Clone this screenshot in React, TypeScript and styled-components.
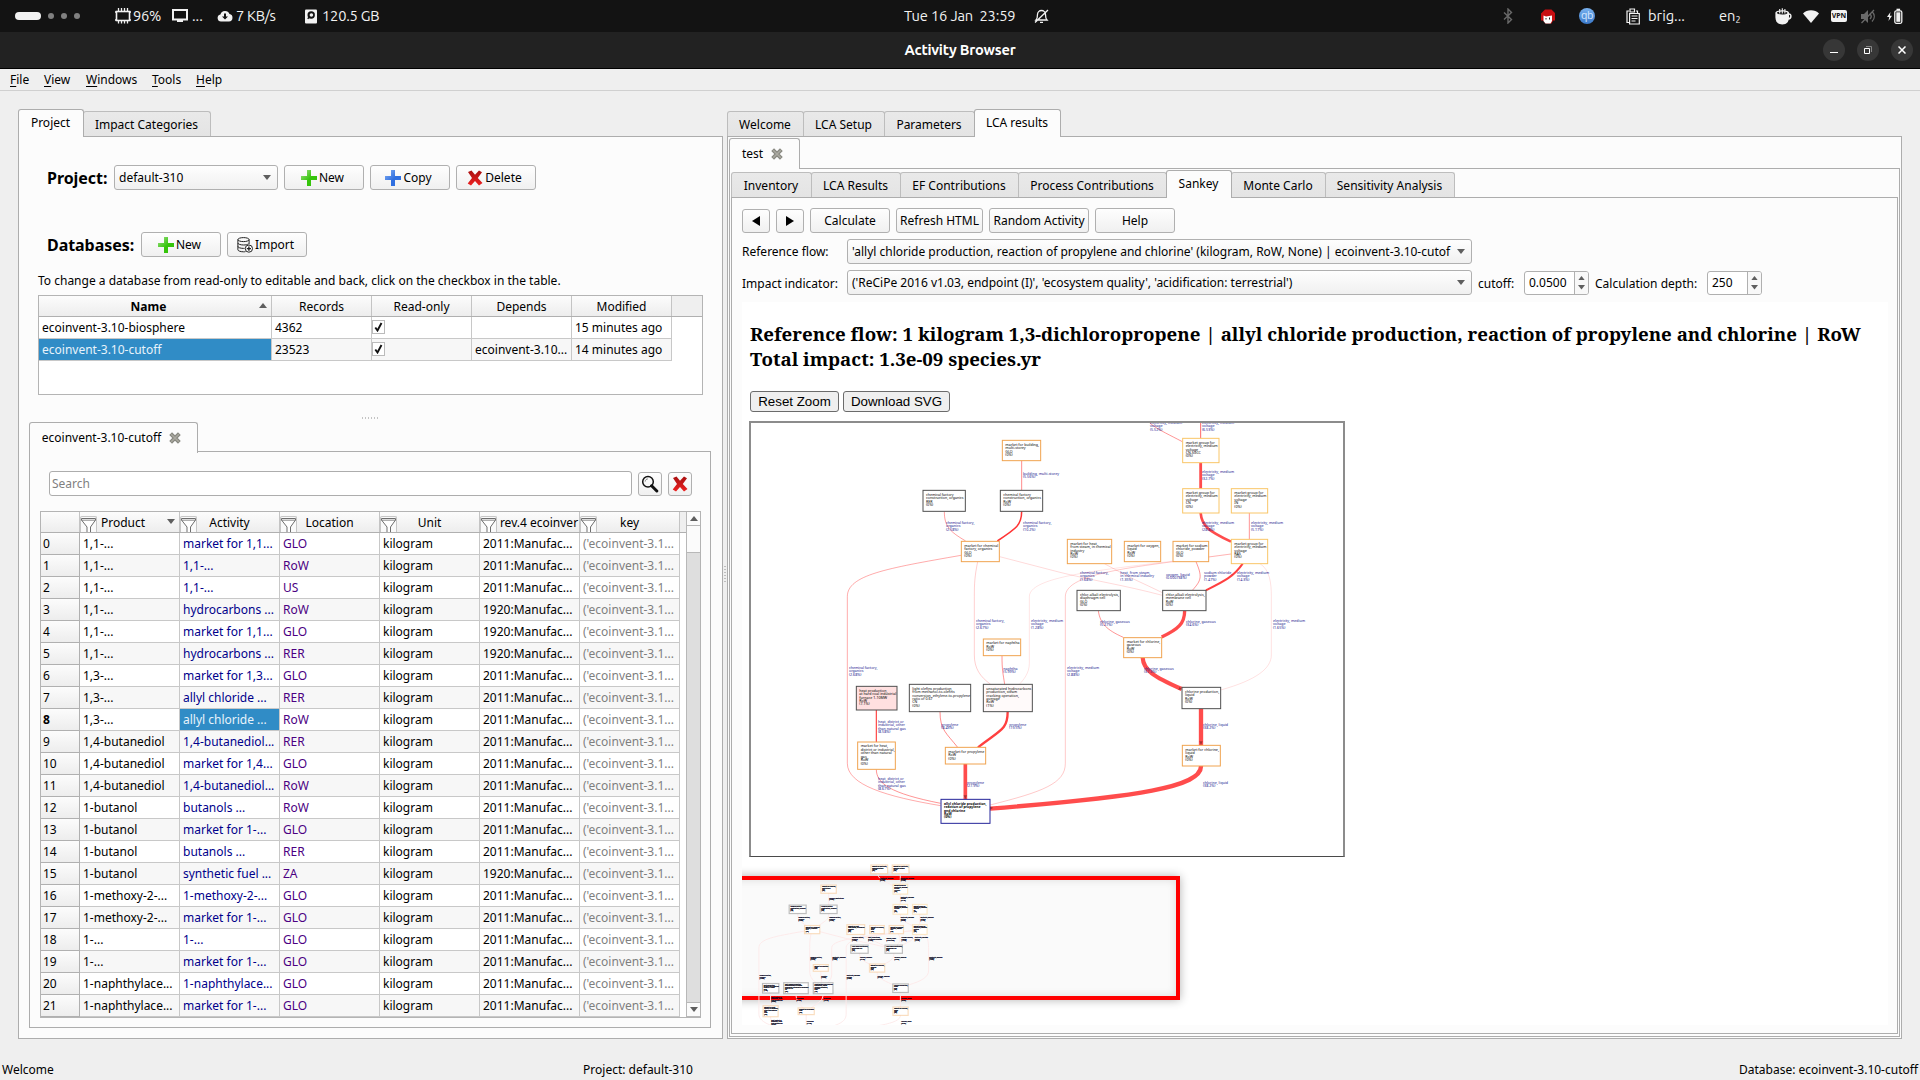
import React from "react";
import styled, { createGlobalStyle, css } from "styled-components";

const SANS = '"Noto Sans", "Open Sans", sans-serif';

const Global = createGlobalStyle`
  * { box-sizing: border-box; }
  body { margin: 0; background: #efefef; overflow: hidden; }
  #root { font: 12px/18px ${SANS}; color: #000; }
  svg { display: block; flex: none; }
`;

const Screen = styled.div`
  width: 1920px; height: 1080px; display: flex; flex-direction: column;
  background: #efefef; overflow: hidden; white-space: nowrap;
`;

/* ---------- desktop bar ---------- */
const TopBar = styled.header`
  height: 32px; background: #131313; color: #f2f2f2; display: flex; align-items: center;
  font: 14.67px/32px "Ubuntu", ${SANS}; flex: none;
`;
const Slot = styled.div<{ w: number; muted?: boolean; ls?: number }>`
  width: ${p => p.w}px; height: 32px; display: flex; align-items: center; flex: none;
  color: ${p => (p.muted ? "#6a6a6a" : "#f2f2f2")};
  letter-spacing: ${p => p.ls ?? 0}px;
`;
const Pill = styled.span`width: 26px; height: 8px; border-radius: 4px; background: #f2f2f2;`;
const Dot = styled.span`width: 6px; height: 6px; border-radius: 3px; background: #808080; margin-left: 7px; &:first-of-type { margin-left: 0; }`;
const QbBadge = styled.span`
  width: 16px; height: 16px; border-radius: 8px; background: linear-gradient(#79b2f0, #3a78c8);
  color: #cfe4ff; font: 10.5px/14px ${SANS}; text-align: center; letter-spacing: -0.4px;
`;
const VpnBadge = styled.span`
  width: 16px; height: 12px; border-radius: 2px; background: #f2f2f2; color: #131313;
  font: bold 7px/12px ${SANS}; text-align: center;
`;
const Sub = styled.span`font-size: 9px; padding-top: 7px;`;

const TitleBar = styled.div`
  height: 37px; background: #222; border-bottom: 1px solid #000; color: #fff; flex: none;
  display: grid; grid-template-columns: 1fr auto 1fr; align-items: center;
  font: bold 14.67px/36px "Ubuntu", ${SANS};
`;
const WinTitle = styled.span`letter-spacing: -0.2px;`;
const WinButtons = styled.div`display: flex; gap: 12px; justify-content: flex-end; padding-right: 7px;`;
const WinButton = styled.span`
  width: 22px; height: 22px; border-radius: 11px; background: #373737;
  display: flex; align-items: center; justify-content: center;
`;

const MenuBar = styled.nav`
  height: 22px; border-bottom: 1px solid #d0d0d0; display: flex; padding-left: 10px; line-height: 21px; flex: none;
`;
const MenuItem = styled.span<{ w: number }>`
  width: ${p => p.w}px;
  &::first-letter { text-decoration: underline; text-underline-offset: 2px; }
`;

/* ---------- tabs and panes ---------- */
const Body = styled.main`flex: 1; display: flex; padding: 18px 18px 0 18px; min-height: 0;`;
const Splitter = styled.div`width: 4px; height: 930px; flex: none; display: flex; align-items: center; justify-content: center;`;
const SplitterGrip = styled.span`
  width: 2px; height: 17px; background: repeating-linear-gradient(180deg, #bdbdbd 0 1px, transparent 1px 3px);
`;
const Column = styled.section<{ w: number; h: number }>`
  width: ${p => p.w}px; height: ${p => p.h}px; display: flex; flex-direction: column; flex: none;
`;
const TabBar = styled.div<{ h: number }>`
  height: ${p => p.h}px; display: flex; align-items: flex-end; margin-bottom: -1px; position: relative; z-index: 1; flex: none;
`;
const Tab = styled.div<{ w: number; on?: boolean; tall?: boolean }>`
  width: ${p => p.w + 1}px; margin-right: -1px; display: flex; align-items: center; justify-content: center; gap: 8px;
  border: 1px solid #bdbdbd; border-bottom: 0; border-radius: 3px 3px 0 0; padding: 1px 1px 0 0;
  height: 25px; margin-bottom: 1px; background: linear-gradient(#e9e9e9, #e4e4e4);
  ${p => p.on && css`
    height: 28px; margin-bottom: 0; padding: 0 1px 1px 0; background: #fcfcfc; border-color: #adadad; z-index: 1; position: relative;
  `}
  ${p => p.tall && css`height: 31px; padding: 0 4px 0 0;`}
`;
const Pane = styled.div<{ px?: number; pb?: number }>`
  flex: 1; min-height: 0; border: 1px solid #adadad; background: #fcfcfc;
  display: flex; flex-direction: column; padding: 0 ${p => p.px ?? 0}px ${p => p.pb ?? 0}px;
`;

/* ---------- controls ---------- */
const Row = styled.div<{ mt?: number; ml?: number; gap?: number; h?: number }>`
  display: flex; align-items: center; gap: ${p => p.gap ?? 6}px; flex: none;
  margin-top: ${p => p.mt ?? 0}px; margin-left: ${p => p.ml ?? 0}px; height: ${p => p.h ?? 25}px;
`;
const Heading = styled.b<{ w: number }>`width: ${p => p.w}px; font-size: 16px; letter-spacing: -0.05px;`;
const face = css`border: 1px solid #b0b0b0; border-radius: 3px; background: linear-gradient(#fefefe, #f0f0f0);`;
const Button = styled.div<{ w?: number; h?: number; icon?: boolean }>`
  ${face} width: ${p => p.w ?? 80}px; height: ${p => p.h ?? 25}px; flex: none; padding-right: ${p => (p.icon ? 3 : 0)}px;
  display: flex; align-items: center; justify-content: center; gap: 2px;
`;
const ComboBox = styled.div<{ w: number }>`
  ${face} width: ${p => p.w}px; height: 25px; flex: none; padding: 0 6px 0 4px;
  display: flex; align-items: center; justify-content: space-between;
`;
const Label = styled.span<{ w?: number; pt?: number }>`
  width: ${p => (p.w ? p.w + "px" : "auto")}; flex: none; padding-top: ${p => p.pt ?? 0}px;
`;
const Spin = styled.div<{ w: number }>`
  width: ${p => p.w}px; height: 24px; border: 1px solid #b0b0b0; border-radius: 3px; background: #fff; flex: none;
  display: flex; align-items: center; padding-left: 4px; justify-content: space-between;
`;
const SpinArrows = styled.span`
  width: 14px; height: 22px; border-left: 1px solid #b0b0b0; background: #f8f8f8; border-radius: 0 2px 2px 0;
  display: flex; flex-direction: column; align-items: center; justify-content: center; gap: 5px;
`;
const SearchBox = styled.div`
  width: 583px; height: 25px; border: 1px solid #adadad; border-radius: 3px; background: #fff; color: #7f7f7f;
  padding-left: 2px; line-height: 23px;
`;
const Dots = styled.div`
  margin: 22px auto 0; width: 17px; height: 2px; flex: none;
  background: repeating-linear-gradient(90deg, #c4c4c4 0 1px, transparent 1px 3px);
`;

/* ---------- tables ---------- */
const TableBox = styled.div<{ mt: number; w: number; h: number; ml?: number }>`
  margin: ${p => p.mt}px 0 0 ${p => p.ml ?? 0}px; width: ${p => p.w}px; height: ${p => p.h}px; border: 1px solid #b4b4b4;
  background: #fff; display: flex; flex: none; overflow: hidden;
`;
const Grid = styled.div`flex: 1; min-width: 0;`;
const HeadRow = styled.div<{ cols: string }>`
  display: grid; grid-template-columns: ${p => p.cols}; height: 21px; background: #efefef; border-bottom: 1px solid #b0b0b0;
`;
const HeadCell = styled.div<{ bold?: boolean }>`
  border-right: 1px solid #c4c4c4; background: linear-gradient(#fcfcfc, #ededed); position: relative; overflow: hidden;
  text-align: center; line-height: 21px; font-weight: ${p => (p.bold ? 700 : 400)}; display: flex; min-width: 0;
`;
const HeadText = styled.span<{ pl?: number; pr?: number }>`
  flex: 1; padding: 0 ${p => p.pr ?? 0}px 0 ${p => p.pl ?? 0}px;
`;
const SortMark = styled.span<{ top: number }>`position: absolute; right: 4px; top: ${p => p.top}px;`;
const FilterBox = styled.span`
  width: 17px; height: 18px; margin: 4px 1px 0 0; border: 1px solid #c6c6c6; border-bottom: 0; border-radius: 2px; flex: none;
  background: #fafafa; display: flex; justify-content: center;
`;
const DataRow = styled.div<{ cols: string; alt?: boolean }>`
  display: grid; grid-template-columns: ${p => p.cols}; height: 22px; background: ${p => (p.alt ? "#f7f7f7" : "#fff")};
`;
const Cell = styled.div<{ color?: string; sel?: boolean }>`
  border-right: 1px solid #c8c8c8; border-bottom: 1px solid #c8c8c8; padding-left: 3px; line-height: 21px; overflow: hidden;
  color: ${p => (p.sel ? "#e8f3fb" : p.color ?? "#000")}; background: ${p => (p.sel ? "#308cc6" : "transparent")};
`;
const Fill = styled.div`background: #fff;`;
const HeadFill = styled.div`background: #efefef;`;
const RowHead = styled.div<{ bold?: boolean }>`
  border-right: 1px solid #b0b0b0; border-bottom: 1px solid #b0b0b0; padding: 1px 0 0 2px; line-height: 20px;
  background: linear-gradient(#fcfcfc, #ededed); font-weight: ${p => (p.bold ? 700 : 400)};
`;
const Check = styled.span`
  width: 13px; height: 14px; border: 1px solid #bbb; background: #fff; margin: 3px 0 0 -3px; display: flex;
  align-items: center; justify-content: center;
`;
const ScrollBar = styled.div`
  width: 14px; border-left: 1px solid #b8b8b8; background: #dedede; display: flex; flex-direction: column; flex: none;
`;
const ScrollPart = styled.span<{ h: number }>`
  height: ${p => p.h}px; background: #fbfbfb; border-bottom: 1px solid #b8b8b8; display: flex; align-items: center; justify-content: center;
`;
const Track = styled.span`flex: 1; border-bottom: 1px solid #b8b8b8;`;

/* ---------- web view ---------- */
const WebView = styled.div`
  margin: 7px 0 0 -1px; width: 1146px; height: 723px; background: #fff; overflow: hidden; flex: none;
`;
const H3 = styled.h3`
  margin: 19px 0 0 8px; font: bold 18.72px/25px "Noto Serif", "DejaVu Serif Condensed", "DejaVu Serif", serif;
  letter-spacing: -0.022px;
`;
const WebButtons = styled.div`display: flex; gap: 4px; margin: 20px 0 0 8px;`;
const WebButton = styled.div<{ w: number }>`
  width: ${p => p.w}px; height: 21px; border: 1px solid #6b6b6b; border-radius: 3px; background: #efefef;
  font: 13.33px/19px "Liberation Sans", Arial, sans-serif; text-align: center;
`;
const GraphBox = styled.div`
  margin: 9px 0 0 7px; width: 596px; height: 436px; border: 2px solid #8c8c8c; border-bottom: 1px solid #4a4a4a; overflow: hidden;
`;
const MiniMap = styled.div`position: relative; height: 168px;`;
const Viewport = styled.div`
  position: absolute; left: -20px; top: 19px; width: 458px; height: 124px; border: 4px solid #f00; background: #fafafa;
  box-shadow: 0 0 9px rgba(0,0,0,.3), inset 0 0 9px rgba(0,0,0,.12);
`;
const MiniLayer = styled.div`position: relative;`;

const StatusBar = styled.footer`
  height: 22px; display: grid; grid-template-columns: 1fr auto 1fr; padding: 0 2px; line-height: 21px; margin-bottom: -1px; flex: none;
`;
const StatusEnd = styled.span`text-align: right;`;
const StatusMid = styled.span`padding-right: 644px;`;

/* ---------- icons ---------- */
const Arrow = ({ up, s = 4, c = "#5e5e5e" }: { up?: boolean; s?: number; c?: string }) => (
  <svg width={s * 2} height={s + 1} viewBox="0 0 8 5"><path d={up ? "M0 5L4 0L8 5Z" : "M0 0L4 5L8 0Z"} fill={c} /></svg>
);
const Plus = ({ blue }: { blue?: boolean }) => (
  <svg width="16" height="16" viewBox="0 0 16 16">
    <defs><linearGradient id={blue ? "pb" : "pg"} x1="0" y1="0" x2="1" y2="1">
      <stop offset="0.1" stopColor={blue ? "#7aa7f0" : "#8fdc75"} /><stop offset="0.55" stopColor={blue ? "#2f6fe0" : "#35c40a"} />
    </linearGradient></defs>
    <path d="M6 0h4v6h6v4h-6v6H6v-6H0V6h6z" fill={`url(#${blue ? "pb" : "pg"})`} />
  </svg>
);
const RedX = () => (
  <svg width="16" height="16" viewBox="0 0 16 16">
    <defs><linearGradient id="rx" x1="0" y1="0" x2="0" y2="1"><stop offset="0" stopColor="#a81010" /><stop offset="1" stopColor="#ee2020" /></linearGradient></defs>
    <path d="M1 2L4.5 .5L8 4.8L12 .5L15 2.2L10.8 8L15.5 13L12 15.5L8 11L4 15.5L.7 13.5L5 8Z" fill="url(#rx)" />
  </svg>
);
const GreyX = () => (
  <svg width="12" height="12" viewBox="0 0 11 11"><path d="M1.5 1.5L9.5 9.5M9.5 1.5L1.5 9.5" stroke="#888880" strokeWidth="3.6" /><path d="M2 2L9 9M9 2L2 9" stroke="#aaa9a0" strokeWidth="1.4" /></svg>
);
const DbIcon = () => (
  <svg width="16" height="16" viewBox="0 0 16 16" fill="none" stroke="#222" strokeWidth="1">
    <ellipse cx="6.5" cy="2.6" rx="5.6" ry="2" />
    <path d="M.9 2.6v10.2c0 1 2.4 2 5.6 2 .8 0 1.5 0 2-.2M12.1 2.6v4.5M.9 6c0 1 2.4 2 5.6 2 2.2 0 4-.4 5-1.1M.9 9.4c0 1 2.4 2 5.6 2h1" />
    <circle cx="11.9" cy="11.6" r="3.6" fill="#fff" /><path d="M11.9 9.5v4.2M9.8 11.6h4.2" strokeWidth="1.4" />
  </svg>
);
const Glass = () => (
  <svg width="18" height="18" viewBox="0 0 18 18" fill="none">
    <circle cx="7" cy="6.8" r="5.3" stroke="#111" strokeWidth="1.5" /><path d="M4.2 6.5c.1-1.5 1.2-2.5 2.6-2.6" stroke="#777" strokeWidth="1" />
    <path d="M10.6 10.8L15.8 16" stroke="#111" strokeWidth="3" strokeLinecap="round" />
  </svg>
);
const Funnel = () => (
  <svg width="15" height="17" viewBox="0 0 15 17"><path d="M.5 1.5h14v1.5L9.5 10v7h-3.5v-7L.5 3z" fill="#fff" stroke="#6e6e6e" /><path d="M.5 3.2h14" stroke="#6e6e6e" strokeWidth=".8" /></svg>
);
const Tick = () => (
  <svg width="9" height="10" viewBox="0 0 9 10"><path d="M1.3 5.5L3.5 8.5L7.5 1" fill="none" stroke="#111" strokeWidth="1.9" /></svg>
);
const Play = ({ left }: { left?: boolean }) => (
  <svg width="8" height="10" viewBox="0 0 8 10"><path d={left ? "M8 0V10L0 5Z" : "M0 0V10L8 5Z"} fill="#000" /></svg>
);
const W = "#f2f2f2";
const Chip = () => (
  <svg width="16" height="16" viewBox="0 0 16 16"><rect x="1.5" y="3.5" width="13" height="9" fill="none" stroke={W} strokeWidth="1.6" />
    <path d="M3.5 0v3M6.5 0v3M9.5 0v3M12.5 0v3M3.5 13v2.5M6.5 13v2.5M9.5 13v2.5M12.5 13v2.5M0 4h1M0 12h1M15 4h1M15 12h1" stroke={W} strokeWidth="1.3" /></svg>
);
const Monitor = () => (
  <svg width="16" height="16" viewBox="0 0 16 16"><path d="M1 2h14v9.5H1z" fill="none" stroke={W} strokeWidth="2" /><path d="M5 14h6v-2h-6z" fill={W} /></svg>
);
const Cloud = () => (
  <svg width="16" height="16" viewBox="0 0 16 16"><path d="M4 13.5a3.6 3.6 0 0 1-.6-7.1A4.8 4.8 0 0 1 12.5 6 3.8 3.8 0 0 1 12 13.5z" fill={W} /><path d="M7 5.5h2v3h2L8 11.5 5 8.500h2z" fill="#131313" /></svg>
);
const Disk = () => (
  <svg width="12" height="15" viewBox="0 0 12 15"><rect width="12" height="14" y=".5" rx="1" fill={W} /><circle cx="6.200" cy="6" r="3.700" fill="#131313" /><circle cx="6.400" cy="6" r="1.800" fill={W} /><path d="M2.700 9.800l1.500-1.500" stroke="#131313" strokeWidth="1.400" /></svg>
);
const BellOff = () => (
  <svg width="15" height="16" viewBox="0 0 15 16" fill="none" stroke={W} strokeWidth="1.3"><path d="M2 12h11c-1.5-1.5-1.5-3-1.5-5.5a4 4 0 0 0-8 0C3.5 9 3.5 10.5 2 12zM6 14.3h3M1 14.5L14 2" /></svg>
);
const Bluetooth = () => (
  <svg width="10" height="16" viewBox="0 0 10 16" fill="none" stroke="#6a6a6a" strokeWidth="1.4"><path d="M1 4.5l7.5 7L5 15V1l3.5 3.5L1 11.5" /></svg>
);
const RedFace = () => (
  <svg width="14" height="15" viewBox="0 0 14 15"><path d="M4 .5h6.5L14 4v7.5h-2L10.5 14.5h-6L2 11.5H0V4.5z" fill="#c80f12" /><path d="M2.5 6.500L5 7.500L11 6.500v5.500L9.500 14.500h-5l-2-2.500z" fill="#fff" /><path d="M5 9v1.500M8.500 8.500v2" stroke="#222" /></svg>
);
const Clip = () => (
  <svg width="14" height="17" viewBox="0 0 14 17" fill="none" stroke={W} strokeWidth="1.2"><path d="M3.5 14.5H1V3h2M10 3h1.5v2M4 1h4.5v3H4z" /><path d="M3.6 5.5h9.7v10.5H3.6z" /><path d="M5.5 8h6M5.5 10.5h6M5.5 13h4" /></svg>
);
const Cup = () => (
  <svg width="17" height="17" viewBox="0 0 17 17">
    <path d="M.4 4.8C.4 3.300 3.500 2.300 7.200 2.300S14 3.300 14 4.800V9c0 4.500-2 7.500-6.800 7.500S.4 13.500.4 9z" fill={W} />
    <path d="M1.800 4.900c1.500-1.900 9.300-1.900 10.800 0-1.500 2-9.300 2-10.800 0z" fill="#131313" />
    <path d="M4.700 5.500V1M7.300 5.500V.3M9.900 5.500V1" stroke={W} strokeWidth="1.100" />
    <path d="M13.500 6c3.300-.5 3.300 4.500-.3 5" fill="none" stroke={W} strokeWidth="1.4" />
  </svg>
);
const Wifi = () => (<svg width="16" height="13" viewBox="0 0 16 13"><path d="M0 3.5C4-.8 12-.8 16 3.5L8 13z" fill={W} /></svg>);
const Mute = () => (
  <svg width="16" height="15" viewBox="0 0 16 15"><path d="M1 5h3l4-4v13L4 10H1z" fill="#6a6a6a" /><path d="M10 5c1.5 1.5 1.5 3.5 0 5M12 2.5c3 3 3 7 0 10M1.5 14L14 1" stroke="#6a6a6a" strokeWidth="1.3" fill="none" /></svg>
);
const Battery = () => (
  <svg width="16" height="16" viewBox="0 0 16 16"><path d="M3.5 4L0 9h2.2L1.5 13 5 7.8H2.8z" fill={W} /><rect x="7.8" y="2.8" width="7" height="12.5" rx="1.5" fill="none" stroke={W} strokeWidth="1.3" /><rect x="9.3" y="4.3" width="4" height="9.5" fill={W} /><rect x="9.5" y=".7" width="3.6" height="2" fill={W} /></svg>
);

/* ---------- Sankey graph ---------- */
type NodeT = [number, number, number, number, string, string];
const OR = "#f0a350", YE = "#f9c668", BK = "#505050", NV = "#25259a";
const nodes: NodeT[] = [
  [1162, -60, 125, 65, OR, "market for electricity,|medium voltage|CN-NM|(0%)"],
  [1322, -60, 125, 65, OR, "market for electricity,|medium voltage|CN-SD|(0%)"],
  [787, 91, 115, 61, OR, "market for building,|multi-storey|GLO|(0%)"],
  [549, 241, 127, 63, BK, "chemical factory|construction, organics|RER|(0%)"],
  [781, 241, 127, 63, BK, "chemical factory|construction, organics|RoW|(0%)"],
  [664, 394, 114, 61, OR, "market for chemical|factory, organics|GLO|(0%)"],
  [982, 388, 133, 73, OR, "market for heat,|from steam, in chemical|industry|RoW|(0%)"],
  [1153, 394, 109, 61, OR, "market for oxygen,|liquid|RoW|(0%)"],
  [1299, 394, 107, 61, OR, "market for sodium|chloride, powder|GLO|(0%)"],
  [1474, 388, 109, 73, YE, "market group for|electricity, medium|voltage|RAS|(0%)"],
  [1328, 85, 109, 73, YE, "market group for|electricity, medium|voltage|CN-SGCC|(0%)"],
  [1328, 236, 109, 73, YE, "market group for|electricity, medium|voltage|CN|(0%)"],
  [1474, 236, 109, 73, YE, "market group for|electricity, medium|voltage|IN|(0%)"],
  [1011, 541, 130, 61, BK, "chlor-alkali electrolysis,|diaphragm cell|GLO|(0%)"],
  [1268, 541, 130, 61, BK, "chlor-alkali electrolysis,|membrane cell|RoW|(0%)"],
  [1151, 683, 114, 60, OR, "market for chlorine,|gaseous|RoW|(0%)"],
  [1326, 832, 116, 64, BK, "chlorine production,|liquid|RoW|(0%)"],
  [1327, 1006, 114, 62, OR, "market for chlorine,|liquid|RoW|(0%)"],
  [730, 687, 112, 50, OR, "market for naphtha|RoW|(0%)"],
  [349, 829, 122, 71, BK, "heat production,|at hard coal industrial|furnace 1-10MW|RoW|(7.1%)"],
  [508, 823, 184, 82, BK, "light olefins production,|from methanol-to-olefins|conversion, ethylene-to-propylene|ratio of 0.67|CN|(0%)"],
  [730, 823, 147, 82, BK, "unsaturated hydrocarbons|production, steam|cracking operation,|average|RoW|(1%)"],
  [353, 996, 113, 82, OR, "market for heat,|district or industrial,|other than natural|gas|RoW|(0%)"],
  [616, 1012, 121, 50, OR, "market for propylene|RoW|(0%)"],
  [603, 1168, 147, 72, NV, "allyl chloride production,|reaction of propylene|and chlorine|RoW|(0%)"],
];
const edges: [string, number, number][] = [
  ["M1213 5C1213 40 1250 55 1327 95", 2.5, 0.5],
  ["M1382 5V85", 3, 0.6],
  ["M845 152V241", 2.5, 0.55],
  ["M613 304C613 350 630 365 677 393", 2.5, 0.45],
  ["M845 304C845 345 830 355 772 393", 4.5, 0.8],
  ["M663 436C440 475 322 495 322 560V1060C322 1125 440 1160 602 1187", 2.5, 0.4],
  ["M713 455C704 500 703 520 703 560V735C703 775 720 800 752 823", 2.2, 0.26],
  ["M779 440L960 487C1060 512 1150 525 1267 556", 2, 0.22],
  ["M1473 432C1150 475 868 490 868 560V760C868 790 850 810 838 823", 2, 0.16],
  ["M1473 432C1200 470 976 485 976 560V1060C976 1120 910 1145 750 1185", 2.3, 0.28],
  ["M1093 461L1160 497C1190 512 1220 525 1267 548", 2, 0.24],
  ["M1368 455C1387 500 1385 510 1357 541", 2.8, 0.45],
  ["M1508 461C1482 500 1450 515 1398 541", 6, 0.75],
  ["M1382 309C1385 350 1410 365 1473 395", 8, 0.7],
  ["M1382 158V236", 8.5, 0.7],
  ["M1528 309V388", 2.5, 0.5],
  ["M1560 461C1590 480 1594 520 1594 560V735C1594 775 1550 810 1442 840", 2, 0.18],
  ["M1075 602C1080 640 1100 660 1150 682", 2.5, 0.5],
  ["M1334 602C1334 640 1315 658 1265 681", 10, 0.7],
  ["M1208 743C1210 780 1240 800 1325 837", 12.5, 0.7],
  ["M1383 896V1006", 13, 0.7],
  ["M1383 1068C1385 1130 1200 1160 750 1196", 13, 0.7],
  ["M786 738C786 780 789 790 794 823", 2.5, 0.5],
  ["M600 905C600 960 620 970 653 1012", 2.5, 0.55],
  ["M803 905C803 960 780 960 714 1012", 7, 0.75],
  ["M676 1062V1168", 11, 0.7],
  ["M409 900V996", 3.5, 0.75],
  ["M409 1078C409 1120 450 1150 602 1180", 2.5, 0.5],
];
const EL = "electricity, medium|voltage|", CF = "chemical factory,|organics|", HD = "heat, district or|industrial, other|than natural gas|";
const labels: [number, number, string][] = [
  [1230, 42, EL + "(5.52%)"], [1386, 42, EL + "(6.53%)"],
  [849, 194, "building, multi-storey|(5.56%)"],
  [618, 341, CF + "(2.58%)"], [849, 341, CF + "(10.2%)"],
  [1020, 491, CF + "(1.68%)"], [1141, 491, "heat, from steam,|in chemical industry|(1.35%)"],
  [1278, 497, "oxygen, liquid|(0.000738%)"], [1392, 491, "sodium chloride,|powder|(1.47%)"],
  [1491, 491, EL + "(14.3%)"], [1386, 188, EL + "(32.7%)"], [1386, 341, EL + "(28.8%)"], [1533, 341, EL + "(5.17%)"],
  [1080, 639, "chlorine, gaseous|(5.27%)"], [1338, 639, "chlorine, gaseous|(34.6%)"], [1599, 635, EL + "(1.65%)"],
  [708, 635, CF + "(2.67%)"], [873, 635, EL + "(1.28%)"], [327, 776, CF + "(2.68%)"], [981, 776, EL + "(2.88%)"],
  [1212, 780, "chlorine, gaseous|(37.9%)"], [1389, 947, "chlorine, liquid|(38.2%)"], [1389, 1121, "chlorine, liquid|(38.2%)"],
  [790, 779, "naphtha|(5.99%)"], [414, 938, HD + "(8.58%)"], [414, 1109, HD + "(8.67%)"],
  [604, 947, "propylene|(8.43%)"], [808, 947, "propylene|(19.5%)"], [681, 1121, "propylene|(27.9%)"],
];
const GraphText = styled.text<{ $bold?: boolean; $mini?: boolean }>`
  font: ${p => (p.$bold ? 700 : 400)} ${p => (p.$bold ? 10.3 : 10.8)}px ${SANS};
  stroke: ${p => (p.$mini ? "currentColor" : "none")}; stroke-width: 1.2px; color: #000018;
`;
const Lines = ({ x, y, t, fill, bold, mini }: { x: number; y: number; t: string; fill: string; bold?: boolean; mini?: boolean }) => (
  <GraphText x={x} y={y} fill={fill} $bold={bold} $mini={mini}>
    {t.split("|").map((l, i) => <tspan key={i} x={x} dy={i ? 10.3 : 0}>{l}</tspan>)}
  </GraphText>
);
const Graph = ({ mini }: { mini?: boolean }) => (
  <>
    {edges.map(([d, w, o], i) => (
      <path key={i} d={d} fill="none" stroke={mini ? "#fdeaea" : "#f00"} strokeWidth={mini ? 7 : w} strokeOpacity={mini ? 1 : o} />
    ))}
    {!mini && <g fill="#a33"><path d="M1378 994h10l-5 12zM671 1156h10l-5 12zM750 1190v9l10-6zM1325 838l-10 2 4-10z" /></g>}
    {nodes.map(([x, y, w, h, c, t], i) => (
      <g key={i}>
        <rect x={x} y={y} width={w} height={h} fill={!mini && i === 19 ? "#ffe0e0" : !mini && i === 21 ? "#fffafa" : "#fff"}
          stroke={c} strokeOpacity={mini ? 0.36 : 1} strokeWidth={mini ? 9 : 3} />
        <Lines x={x + 9} y={y + 16} t={t} fill="#000" bold={i === 24 || mini} mini={mini} />
      </g>
    ))}
    {labels.map(([x, y, t], i) => <Lines key={i} x={x} y={y} t={t} fill={mini ? "#000028" : "#14148c"} bold={mini} mini={mini} />)}
  </>
);

/* ---------- data ---------- */
const DB_COLS = "233px 100px 100px 100px 100px 1fr";
const ACT_COLS = "39px 100px 100px 100px 100px 100px 100px 1fr";
const rows: [string, string, string, string][] = [
  ["1,1-...", "market for 1,1...", "GLO", "2011"], ["1,1-...", "1,1-...", "RoW", "2011"], ["1,1-...", "1,1-...", "US", "2011"],
  ["1,1-...", "hydrocarbons ...", "RoW", "1920"], ["1,1-...", "market for 1,1...", "GLO", "1920"], ["1,1-...", "hydrocarbons ...", "RER", "1920"],
  ["1,3-...", "market for 1,3...", "GLO", "2011"], ["1,3-...", "allyl chloride ...", "RER", "2011"], ["1,3-...", "allyl chloride ...", "RoW", "2011"],
  ["1,4-butanediol", "1,4-butanediol...", "RER", "2011"], ["1,4-butanediol", "market for 1,4...", "GLO", "2011"], ["1,4-butanediol", "1,4-butanediol...", "RoW", "2011"],
  ["1-butanol", "butanols ...", "RoW", "2011"], ["1-butanol", "market for 1-...", "GLO", "2011"], ["1-butanol", "butanols ...", "RER", "2011"],
  ["1-butanol", "synthetic fuel ...", "ZA", "1920"], ["1-methoxy-2-...", "1-methoxy-2-...", "GLO", "2011"], ["1-methoxy-2-...", "market for 1-...", "GLO", "2011"],
  ["1-...", "1-...", "GLO", "2011"], ["1-...", "market for 1-...", "GLO", "2011"], ["1-naphthylace...", "1-naphthylace...", "GLO", "2011"],
  ["1-naphthylace...", "market for 1-...", "GLO", "2011"],
];
const filterHeads: [string, number, number][] = [
  ["Product", 0, 31], ["Activity", 0, 18], ["Location", 0, 18], ["Unit", 0, 18], ["rev.4 ecoinver", 1, 0], ["key", 0, 18],
];

const PaneUnder = styled(Pane)`margin-top: -1px; margin-right: 1px;`;
const Left = () => (
  <Column w={705} h={930}>
    <TabBar h={28}><Tab w={65} on>Project</Tab><Tab w={127}>Impact Categories</Tab></TabBar>
    <Pane px={10} pb={10}>
      <Row mt={28} ml={18}>
        <Heading w={61}>Project:</Heading>
        <ComboBox w={164}>default-310<Arrow /></ComboBox>
        <Button icon><Plus />New</Button><Button icon><Plus blue />Copy</Button><Button icon><RedX />Delete</Button>
      </Row>
      <Row mt={42} ml={18}>
        <Heading w={88}>Databases:</Heading>
        <Button icon><Plus />New</Button><Button icon><DbIcon />Import</Button>
      </Row>
      <Row mt={15} ml={9} h={18}><Label>To change a database from read-only to editable and back, click on the checkbox in the table.</Label></Row>
      <TableBox mt={5} ml={9} w={665} h={100}>
        <Grid>
          <HeadRow cols={DB_COLS}>
            <HeadCell bold><HeadText pr={13}>Name</HeadText><SortMark top={7}><Arrow up s={4} /></SortMark></HeadCell>
            {["Records", "Read-only", "Depends", "Modified"].map(h => <HeadCell key={h}><HeadText>{h}</HeadText></HeadCell>)}
            <HeadFill />
          </HeadRow>
          <DataRow cols={DB_COLS}>
            <Cell>ecoinvent-3.10-biosphere</Cell><Cell>4362</Cell><Cell><Check><Tick /></Check></Cell><Cell /><Cell>15 minutes ago</Cell><Fill />
          </DataRow>
          <DataRow cols={DB_COLS} alt>
            <Cell sel>ecoinvent-3.10-cutoff</Cell><Cell>23523</Cell><Cell><Check><Tick /></Check></Cell><Cell>ecoinvent-3.10...</Cell><Cell>14 minutes ago</Cell><Fill />
          </DataRow>
        </Grid>
      </TableBox>
      <Dots />
      <Row mt={2} h={31} gap={0}><TabBar h={31}><Tab w={168} on tall>ecoinvent-3.10-cutoff <GreyX /></Tab></TabBar></Row>
      <PaneUnder>
        <Row mt={19} ml={19}>
          <SearchBox>Search</SearchBox><Button w={24} h={24}><Glass /></Button><Button w={24} h={24}><RedX /></Button>
        </Row>
        <TableBox mt={15} ml={10} w={661} h={507}>
          <Grid>
            <HeadRow cols={ACT_COLS}>
              <HeadCell />
              {filterHeads.map(([h, pl, pr], i) => (
                <HeadCell key={h}>
                  <FilterBox><Funnel /></FilterBox>
                  <HeadText pl={pl} pr={pr}>{h}</HeadText>
                  {i === 0 && <SortMark top={7}><Arrow s={4} /></SortMark>}
                </HeadCell>
              ))}
              <HeadFill />
            </HeadRow>
            {rows.map(([p, a, l, y], i) => (
              <DataRow key={i} cols={ACT_COLS} alt={i % 2 === 1}>
                <RowHead bold={i === 8}>{i}</RowHead>
                <Cell>{p}</Cell><Cell color="#00008b" sel={i === 8}>{a}</Cell><Cell color="#4b0082">{l}</Cell><Cell>kilogram</Cell>
                <Cell>{y}:Manufac...</Cell><Cell color="#7f7f7f">('ecoinvent-3.1...</Cell><Fill />
              </DataRow>
            ))}
          </Grid>
          <ScrollBar>
            <ScrollPart h={14}><Arrow up s={4} /></ScrollPart><ScrollPart h={27} /><Track /><ScrollPart h={14}><Arrow s={4} /></ScrollPart>
          </ScrollBar>
        </TableBox>
      </PaneUnder>
    </Pane>
  </Column>
);

const Gap = styled.span<{ w: number }>`width: ${p => p.w}px; flex: none;`;
const TestTabs = styled(TabBar)`margin-top: 1px;`;
const SubTabs = styled(TabBar)`margin-top: 1px;`;
const Right = () => (
  <Column w={1175} h={930}>
    <TabBar h={28}>
      <Tab w={76}>Welcome</Tab><Tab w={81}>LCA Setup</Tab><Tab w={90}>Parameters</Tab><Tab w={86} on>LCA results</Tab>
    </TabBar>
    <Pane px={1} pb={1}>
      <TestTabs h={31}><Tab w={70} on tall>test <GreyX /></Tab></TestTabs>
      <Pane px={1} pb={2}>
        <SubTabs h={28}>
          <Tab w={80}>Inventory</Tab><Tab w={89}>LCA Results</Tab><Tab w={118}>EF Contributions</Tab><Tab w={148}>Process Contributions</Tab>
          <Tab w={65} on>Sankey</Tab><Tab w={94}>Monte Carlo</Tab><Tab w={129}>Sensitivity Analysis</Tab>
        </SubTabs>
        <Pane px={11}>
          <Row mt={10} ml={-1}>
            <Button w={28} h={24}><Play left /></Button><Button w={28} h={24}><Play /></Button><Button>Calculate</Button>
            <Button w={87}>Refresh HTML</Button><Button w={100}>Random Activity</Button><Button>Help</Button>
          </Row>
          <Row mt={6} ml={-1} gap={0}>
            <Label w={105}>Reference flow:</Label>
            <ComboBox w={625}>'allyl chloride production, reaction of propylene and chlorine' (kilogram, RoW, None) | ecoinvent-3.10-cutof<Arrow /></ComboBox>
          </Row>
          <Row mt={6} ml={-1} gap={0}>
            <Label w={105} pt={2}>Impact indicator:</Label>
            <ComboBox w={625}>('ReCiPe 2016 v1.03, endpoint (I)', 'ecosystem quality', 'acidification: terrestrial')<Arrow /></ComboBox>
            <Gap w={6} /><Label w={46} pt={2}>cutoff:</Label>
            <Spin w={65}>0.0500<SpinArrows><Arrow up s={3.5} /><Arrow s={3.5} /></SpinArrows></Spin>
            <Gap w={6} /><Label w={112} pt={2}>Calculation depth:</Label>
            <Spin w={55}>250<SpinArrows><Arrow up s={3.5} /><Arrow s={3.5} /></SpinArrows></Spin>
          </Row>
          <WebView>
            <H3>Reference flow: 1 kilogram 1,3-dichloropropene | allyl chloride production, reaction of propylene and chlorine | RoW<br />Total impact: 1.3e-09 species.yr</H3>
            <WebButtons><WebButton w={89}>Reset Zoom</WebButton><WebButton w={107}>Download SVG</WebButton></WebButtons>
            <GraphBox><svg width="592" height="433" viewBox="33 39 1776 1299"><Graph /></svg></GraphBox>
            <MiniMap>
              <Viewport />
              <MiniLayer><svg width="470" height="168" viewBox="195 -120 3525 1260"><Graph mini /></svg></MiniLayer>
            </MiniMap>
          </WebView>
        </Pane>
      </Pane>
    </Pane>
  </Column>
);

export default function App() {
  return (
    <Screen>
      <Global />
      <TopBar>
        <Gap w={15} /><Slot w={33}><Pill /></Slot><Slot w={67}><Dot /><Dot /><Dot /></Slot>
        <Slot w={18}><Chip /></Slot><Slot w={39} ls={-0.3}>96%</Slot>
        <Slot w={20}><Monitor /></Slot><Slot w={25}>...</Slot>
        <Slot w={19}><Cloud /></Slot><Slot w={69} ls={-0.3}>7 KB/s</Slot>
        <Slot w={17}><Disk /></Slot><Slot w={582} ls={-0.2}>120.5 GB</Slot>
        <Slot w={130} ls={-0.15}>Tue 16 Jan&nbsp; 23:59</Slot><Slot w={469}><BellOff /></Slot>
        <Slot w={38}><Bluetooth /></Slot><Slot w={38}><RedFace /></Slot><Slot w={47}><QbBadge>qb</QbBadge></Slot>
        <Slot w={22}><Clip /></Slot><Slot w={71}>brig...</Slot><Slot w={56}>en<Sub>2</Sub></Slot>
        <Slot w={28}><Cup /></Slot><Slot w={28}><Wifi /></Slot><Slot w={29}><VpnBadge>VPN</VpnBadge></Slot>
        <Slot w={27}><Mute /></Slot><Slot w={18}><Battery /></Slot>
      </TopBar>
      <TitleBar>
        <span />
        <WinTitle>Activity Browser</WinTitle>
        <WinButtons>
          <WinButton><svg width="8" height="8"><path d="M0 6.5h8" stroke="#fff" /></svg></WinButton>
          <WinButton><svg width="8" height="8" fill="none"><path d="M2 .5h5.5V6" stroke="#888" /><path d="M.5 2.5h5v5h-5z" stroke="#fff" /></svg></WinButton>
          <WinButton><svg width="8" height="8"><path d="M.5.5l7 7M7.5.5l-7 7" stroke="#fff" strokeWidth="1.5" /></svg></WinButton>
        </WinButtons>
      </TitleBar>
      <MenuBar>
        <MenuItem w={34}>File</MenuItem><MenuItem w={42}>View</MenuItem><MenuItem w={66}>Windows</MenuItem><MenuItem w={44}>Tools</MenuItem><MenuItem w={40}>Help</MenuItem>
      </MenuBar>
      <Body><Left /><Splitter><SplitterGrip /></Splitter><Right /></Body>
      <StatusBar><span>Welcome</span><StatusMid>Project: default-310</StatusMid><StatusEnd>Database: ecoinvent-3.10-cutoff</StatusEnd></StatusBar>
    </Screen>
  );
}
